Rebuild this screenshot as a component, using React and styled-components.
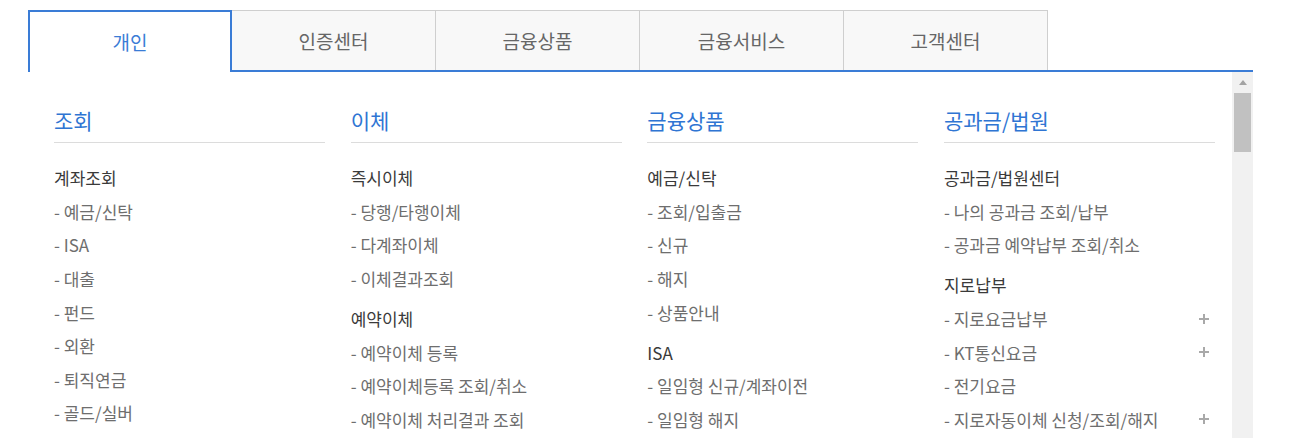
import React from 'react';
import styled, { createGlobalStyle, css } from 'styled-components';

const BLUE = '#3a7cd6';

const GlobalStyle = createGlobalStyle`
  html, body {
    margin: 0;
    padding: 0;
    background: #fff;
    overflow: hidden;
  }
  body {
    font-family: "Noto Sans CJK KR", "Noto Sans", "Liberation Sans", sans-serif;
  }
`;

const Page = styled.div`
  padding: 10px 0 0 28px;
  width: 1225px;
`;

const TabBar = styled.ul`
  display: flex;
  margin: 0;
  padding: 0;
  list-style: none;
  height: 62px;
  box-sizing: border-box;
  border-bottom: 2px solid ${BLUE};
`;

const Tab = styled.li`
  flex: 0 0 204px;
  box-sizing: border-box;
  height: 60px;
  display: flex;
  align-items: center;
  justify-content: center;
  font-size: 19px;
  color: #666;
  background: #f8f8f8;
  border-top: 1px solid #cfcfcf;
  border-right: 1px solid #cfcfcf;

  ${p => p.$active && css`
    height: 62px;
    margin-bottom: -2px;
    padding-bottom: 1px;
    background: #fff;
    color: ${BLUE};
    border: 2px solid ${BLUE};
    border-bottom: none;
    position: relative;
    z-index: 1;
  `}
`;

const Panel = styled.div`
  display: flex;
  height: 366px;
`;

const Content = styled.div`
  flex: 1;
  overflow: hidden;
  padding: 33px 17px 0 26px;
  display: grid;
  grid-template-columns: repeat(4, 271px);
  column-gap: 25.67px;
  align-content: start;
`;

const Column = styled.div`
  display: flex;
  flex-direction: column;
`;

const Heading = styled.h3`
  margin: 0 0 18px;
  padding-bottom: 7px;
  font-size: 21px;
  font-weight: 400;
  line-height: 30px;
  color: #2f75d3;
  border-bottom: 1px solid #dcdcdc;
`;

const Group = styled.div`
  & + & {
    margin-top: 6.4px;
  }
`;

const Category = styled.div`
  height: 33.6px;
  display: flex;
  align-items: center;
  font-size: 17px;
  color: #3a3a3a;
`;

const Item = styled.div`
  height: 33.6px;
  display: flex;
  align-items: center;
  justify-content: space-between;
  font-size: 17px;
  color: #6e6e6e;
`;

const Plus = styled.svg`
  width: 10px;
  height: 10px;
  margin-right: 6px;
  flex: none;
`;

const Scrollbar = styled.div`
  flex: 0 0 21px;
  background: #f1f1f1;
  display: flex;
  flex-direction: column;
  align-items: center;
`;

const ArrowButton = styled.div`
  height: 21px;
  width: 100%;
  display: flex;
  align-items: center;
  justify-content: center;

  &::before {
    content: '';
    border-left: 4.5px solid transparent;
    border-right: 4.5px solid transparent;
    border-bottom: 5px solid #a3a3a3;
  }
`;

const Thumb = styled.div`
  width: 17px;
  height: 59px;
  background: #c1c1c1;
`;

const PlusIcon = () => (
  <Plus viewBox="0 0 10 10">
    <rect x="0" y="4" width="10" height="2" fill="#a9a9a9" />
    <rect x="4" y="0" width="2" height="10" fill="#a9a9a9" />
  </Plus>
);

const tabs = ['개인', '인증센터', '금융상품', '금융서비스', '고객센터'];

const menu = [
  {
    title: '조회',
    groups: [
      { name: '계좌조회', items: ['예금/신탁', 'ISA', '대출', '펀드', '외환', '퇴직연금', '골드/실버'] },
    ],
  },
  {
    title: '이체',
    groups: [
      { name: '즉시이체', items: ['당행/타행이체', '다계좌이체', '이체결과조회'] },
      { name: '예약이체', items: ['예약이체 등록', '예약이체등록 조회/취소', '예약이체 처리결과 조회'] },
    ],
  },
  {
    title: '금융상품',
    groups: [
      { name: '예금/신탁', items: ['조회/입출금', '신규', '해지', '상품안내'] },
      { name: 'ISA', items: ['일임형 신규/계좌이전', '일임형 해지'] },
    ],
  },
  {
    title: '공과금/법원',
    groups: [
      { name: '공과금/법원센터', items: ['나의 공과금 조회/납부', '공과금 예약납부 조회/취소'] },
      {
        name: '지로납부',
        items: [
          { label: '지로요금납부', more: true },
          { label: 'KT통신요금', more: true },
          '전기요금',
          { label: '지로자동이체 신청/조회/해지', more: true },
        ],
      },
    ],
  },
];

export default function App() {
  return (
    <Page>
      <GlobalStyle />
      <TabBar>
        {tabs.map((t, i) => (
          <Tab key={t} $active={i === 0}>{t}</Tab>
        ))}
      </TabBar>
      <Panel>
        <Content>
          {menu.map(col => (
            <Column key={col.title}>
              <Heading>{col.title}</Heading>
              {col.groups.map(g => (
                <Group key={g.name}>
                  <Category>{g.name}</Category>
                  {g.items.map(it => {
                    const item = typeof it === 'string' ? { label: it } : it;
                    return (
                      <Item key={item.label}>
                        <span>- {item.label}</span>
                        {item.more && <PlusIcon />}
                      </Item>
                    );
                  })}
                </Group>
              ))}
            </Column>
          ))}
        </Content>
        <Scrollbar>
          <ArrowButton />
          <Thumb />
        </Scrollbar>
      </Panel>
    </Page>
  );
}
